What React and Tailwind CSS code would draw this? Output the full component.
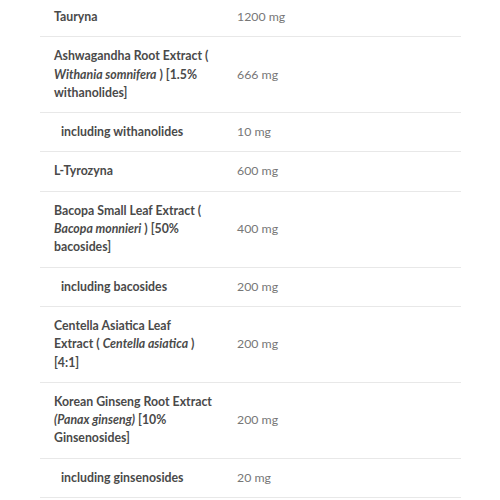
const rows = [
  { name: <>Tauryna</>, value: '1200 mg' },
  {
    name: (
      <>
        Ashwagandha Root Extract ( <em>Withania somnifera</em> ) [1.5% withanolides]
      </>
    ),
    value: '666 mg',
  },
  { name: <>including withanolides</>, value: '10 mg', sub: true },
  { name: <>L-Tyrozyna</>, value: '600 mg' },
  {
    name: (
      <>
        Bacopa Small Leaf Extract ( <em>Bacopa monnieri</em> ) [50% bacosides]
      </>
    ),
    value: '400 mg',
  },
  { name: <>including bacosides</>, value: '200 mg', sub: true },
  {
    name: (
      <>
        Centella Asiatica Leaf Extract ( <em>Centella asiatica</em> ) [4:1]
      </>
    ),
    value: '200 mg',
    narrow: true,
  },
  {
    name: (
      <>
        Korean Ginseng Root Extract <em>(Panax ginseng)</em> [10% Ginsenosides]
      </>
    ),
    value: '200 mg',
  },
  { name: <>including ginsenosides</>, value: '20 mg', sub: true },
];

export default function App() {
  return (
    <div
      className="w-[500px] h-[500px] overflow-hidden bg-white"
      style={{ fontFamily: 'Lato, "Liberation Sans", sans-serif' }}
    >
      <table className="ml-[40px] -mt-[2px] w-[421px] table-fixed border-collapse text-[12.3px] leading-[18.3px]">
        <colgroup>
          <col className="w-[197px]" />
          <col />
        </colgroup>
        <tbody>
          {rows.map((r, i) => (
            <tr key={i} className="border-b border-[#e8e8e8]">
              <td
                className={`py-[10px] pr-[20px] align-middle font-bold text-[#4a4a4a] ${
                  r.sub ? 'pl-[21px]' : 'pl-[14px]'
                }`}
              >
                <div className={r.narrow ? 'w-[150px]' : 'w-[160px]'}>{r.name}</div>
              </td>
              <td className="py-[10px] align-middle text-[#777]">{r.value}</td>
            </tr>
          ))}
        </tbody>
      </table>
    </div>
  );
}
